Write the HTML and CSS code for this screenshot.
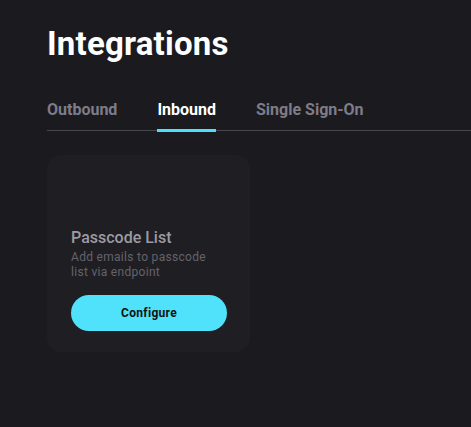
FILE: index.html
```html
<!DOCTYPE html>
<html lang="en">
<head>
    <meta charset="UTF-8">
    <title>Integrations</title>
    <link rel="stylesheet" href="styles.css">
</head>
<body>
    <div class="page">
        <h1 class="title">Integrations</h1>
        <div class="tabs">
            <div class="tab">Outbound</div>
            <div class="tab active">Inbound</div>
            <div class="tab">Single Sign-On</div>
        </div>
        <div class="cards">
            <div class="card">
                <div class="card-name">Passcode List</div>
                <div class="card-desc">Add emails to passcode list via endpoint</div>
                <button class="btn">Configure</button>
            </div>
        </div>
    </div>
</body>
</html>
```
FILE: styles.css
```css
body {
    margin: 0;
    background: #1b1a1f;
    font-family: Roboto, "Liberation Sans", sans-serif;
    color: #fff;
}

.page {
    padding: 24px 0 0 47px;
}

.title {
    margin: 0;
    font-size: 33px;
    font-weight: 700;
    line-height: 40px;
    letter-spacing: 0.2px;
}

.tabs {
    display: flex;
    gap: 40px;
    margin-top: 36px;
    border-bottom: 1px solid #48474e;
}

.tab {
    font-size: 16px;
    font-weight: 700;
    color: #7e7c88;
    line-height: 20px;
    padding-bottom: 9px;
    border-bottom: 3px solid transparent;
    margin-bottom: -2px;
}

.tab.active {
    color: #fff;
    border-bottom-color: #4fdff9;
}

.cards {
    margin-top: 24px;
}

.card {
    width: 155px;
    background: #1f1e23;
    border-radius: 14px;
    padding: 0 24px 21px;
    display: flex;
    flex-direction: column;
    justify-content: flex-end;
    height: 176px;
}

.card-name {
    font-size: 16px;
    font-weight: 500;
    color: #9c9ba3;
    line-height: 20px;
}

.card-desc {
    font-size: 12px;
    color: #64636b;
    line-height: 15px;
    margin-top: 2px;
    letter-spacing: 0.3px;
}

.btn {
    margin-top: 15px;
    height: 36px;
    width: 156px;
    border: none;
    border-radius: 18px;
    background: #50e1fb;
    color: #111;
    font-family: inherit;
    font-size: 12px;
    font-weight: 700;
    letter-spacing: 0.3px;
}
```
